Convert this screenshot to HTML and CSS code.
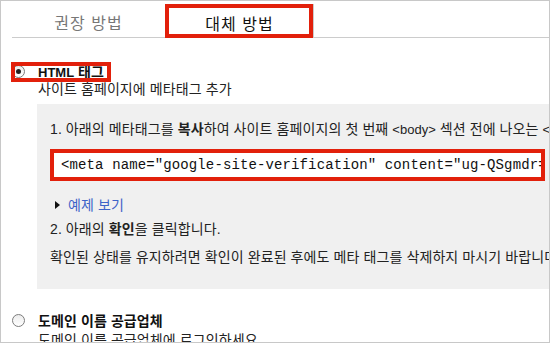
FILE: index.html
```html
<!DOCTYPE html>
<html lang="ko">
<head>
    <meta charset="UTF-8">
    <meta name="viewport" content="width=device-width, initial-scale=1.0">
    <title>사이트 확인 - 대체 방법</title>
    <link rel="stylesheet" href="styles.css">
</head>
<body>

<div class="frame">
    <!-- 탭 -->
    <div class="tabs">
        <div class="tab">권장 방법</div>
        <div class="tab on">대체 방법</div>
        <div class="tab-rest"></div>
    </div>

    <!-- HTML 태그 -->
    <div class="opt-head marked">
        <span class="radio checked"></span>
        <span class="opt-title"><span class="latin">HTML</span> 태그</span>
    </div>
    <div class="opt-desc">사이트 홈페이지에 메타태그 추가</div>

    <div class="panel">
        <div class="line">1. 아래의 메타태그를 <b>복사</b>하여 사이트 홈페이지의 첫 번째 <span class="latin">&lt;body&gt;</span> 섹션 전에 나오는 <span class="latin">&lt;head&gt;</span> 섹션에 붙여넣습니다.</div>
        <div class="code">&lt;meta name="google-site-verification" content="ug-QSgmdr=Xk2Lh8vWcE0" /&gt;</div>
        <div class="line example"><span class="arrow"></span><a href="#">예제 보기</a></div>
        <div class="line step2">2. 아래의 <b>확인</b>을 클릭합니다.</div>
        <div class="line note">확인된 상태를 유지하려면 확인이 완료된 후에도 메타 태그를 삭제하지 마시기 바랍니다.</div>
    </div>

    <!-- 도메인 이름 공급업체 -->
    <div class="opt-head second">
        <span class="radio"></span>
        <span class="opt-title">도메인 이름 공급업체</span>
    </div>
    <div class="opt-desc last">도메인 이름 공급업체에 로그인하세요.</div>
</div>

</body>
</html>
```

FILE: styles.css
```css
body {
    margin: 0;
    font-family: 'Liberation Sans', 'Noto Sans CJK KR', sans-serif;
    font-size: 14px;
    letter-spacing: 0.1px;
    color: #222;
    background-color: #fff;
}

.latin {
    font-size: 13px;
    letter-spacing: 0;
}

.frame {
    width: 550px;
    height: 343px;
    box-sizing: border-box;
    border: 1px solid #c8c8c8;
    overflow: hidden;
    white-space: nowrap;
}

/* 탭 */
.tabs {
    display: flex;
    height: 34px;
    margin-top: 3px;
}

.tab {
    width: 153px;
    margin-left: 11px;
    box-sizing: border-box;
    border-bottom: 1px solid #ccc;
    display: flex;
    align-items: center;
    justify-content: center;
    padding-top: 2px;
    font-size: 16px;
    letter-spacing: 1px;
    color: #777;
}

.tab.on {
    width: 149px;
    margin-left: 0;
    border: 1px solid #ccc;
    border-bottom: none;
    padding-top: 3px;
    color: #111;
    position: relative;
}

.tab.on::after {
    content: "";
    position: absolute;
    left: -1px;
    top: -1px;
    width: 148px;
    height: 34px;
    box-sizing: border-box;
    border: 4px solid #e2200b;
}

.tab-rest {
    flex: 1;
    border-bottom: 1px solid #ccc;
}

/* 옵션 */
.opt-head {
    display: flex;
    align-items: center;
    height: 18px;
    margin-top: 24px;
    position: relative;
}

.opt-head.marked::after {
    content: "";
    position: absolute;
    left: 10px;
    top: 0;
    width: 100px;
    height: 20px;
    box-sizing: border-box;
    border: 4px solid #e2200b;
}

.opt-head.second {
    margin-top: 22px;
}

.radio {
    width: 13px;
    height: 13px;
    margin-left: 11px;
    box-sizing: border-box;
    border: 1px solid #7c7c7c;
    border-radius: 50%;
    background: linear-gradient(#ececec, #fff);
    display: flex;
    align-items: center;
    justify-content: center;
}

.radio.checked::after {
    content: "";
    width: 5px;
    height: 5px;
    border-radius: 50%;
    background-color: #222;
}

.opt-title {
    margin-left: 13px;
    font-weight: bold;
    color: #111;
}

.opt-desc {
    padding-left: 37px;
    line-height: 18px;
}

.opt-desc.last {
    padding-top: 2px;
}

/* 회색 패널 */
.panel {
    margin: 6px -10px 0 36px;
    padding: 16px 0 23px 13px;
    background-color: #f0f0f0;
}

.line {
    line-height: 18px;
}

.code {
    width: 495px;
    height: 32px;
    margin-top: 10px;
    box-sizing: border-box;
    border: 4px solid #e2200b;
    background-color: #fff;
    padding-left: 7px;
    overflow: hidden;
    font-family: 'Liberation Mono', monospace;
    font-size: 14px;
    letter-spacing: 0.12px;
    line-height: 24px;
    color: #111;
}

.example {
    margin-top: 15px;
    display: flex;
    align-items: center;
}

.arrow {
    width: 0;
    height: 0;
    margin: 0 8px 0 5px;
    border-top: 4px solid transparent;
    border-bottom: 4px solid transparent;
    border-left: 5px solid #111;
}

.example a {
    color: #3d63c8;
    text-decoration: none;
}

.step2 {
    margin-top: 6px;
}

.note {
    margin-top: 10px;
}
```
